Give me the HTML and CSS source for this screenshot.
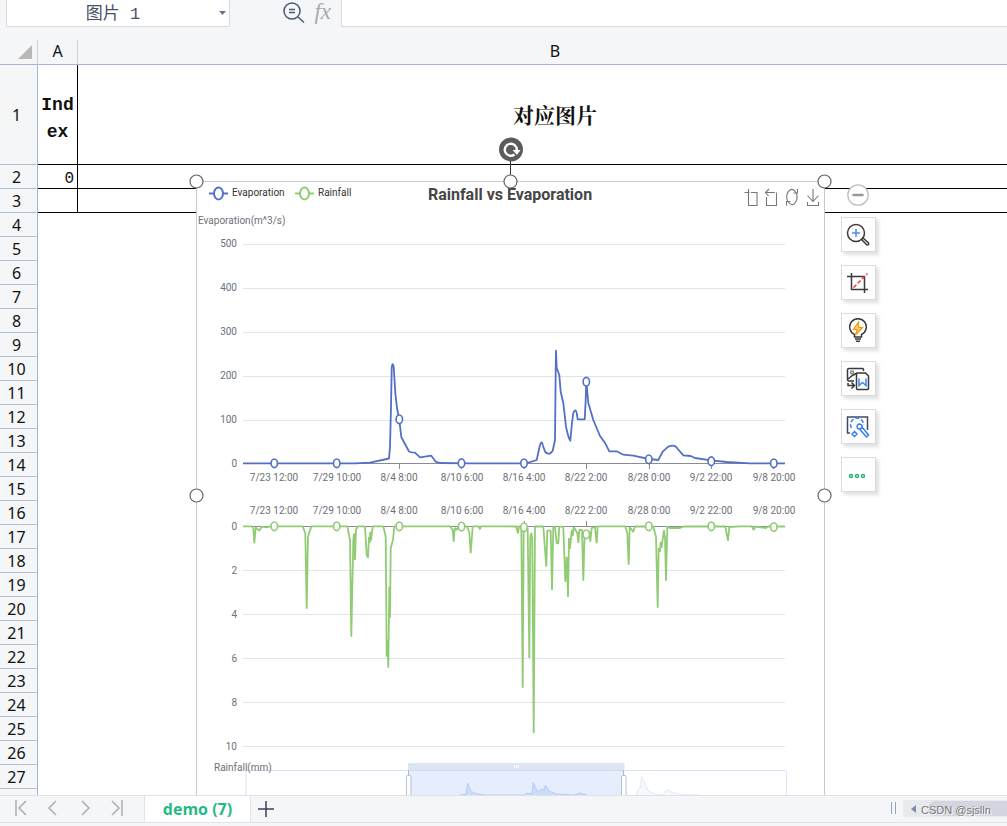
FILE: index.html
```html
<!DOCTYPE html>
<html lang="zh-CN">
<head>
<meta charset="utf-8">
<title>demo (7)</title>
<link rel="stylesheet" href="styles.css">
</head>
<body>
<header class="formula-bar">
  <div class="name-box">
    <input class="name-input" type="text" value="图片 1" aria-label="Name box">
    <button class="name-arrow" type="button" aria-label="Open name list"><svg width="7" height="4" viewBox="0 0 7 4"><path d="M0 0h7L3.5 4z" fill="#66748c"/></svg></button>
  </div>
  <div class="formula-tools">
    <button class="plain" type="button" aria-label="Zoom out"><svg width="24" height="24" viewBox="0 0 24 24" fill="none" stroke="#4b5872" stroke-width="1.5"><circle cx="10" cy="11" r="8"/><path d="M16 17l6 5.500M7 9.500h6M7 12.500h6"/></svg></button>
    <button class="plain fx" type="button">fx</button>
  </div>
  <input class="formula-input" type="text" aria-label="Formula">
</header>

<main class="sheet">
  <table class="grid">
    <colgroup><col class="col-num"><col class="col-a"><col></colgroup>
    <thead>
      <tr><th class="corner"><svg width="14" height="14" viewBox="0 0 14 14"><path d="M14 0v14H0z" fill="#b8b8b8"/></svg></th><th>A</th><th>B</th></tr>
    </thead>
    <tbody>
      <tr class="tall data"><th>1</th><td class="index">Ind<br>ex</td><td class="heading">对应图片</td></tr>
      <tr class="data"><th>2</th><td class="value">0</td><td></td></tr>
      <tr class="data"><th>3</th><td></td><td></td></tr>
      <tr><th>4</th><td></td><td></td></tr>
      <tr><th>5</th><td></td><td></td></tr>
      <tr><th>6</th><td></td><td></td></tr>
      <tr><th>7</th><td></td><td></td></tr>
      <tr><th>8</th><td></td><td></td></tr>
      <tr><th>9</th><td></td><td></td></tr>
      <tr><th>10</th><td></td><td></td></tr>
      <tr><th>11</th><td></td><td></td></tr>
      <tr><th>12</th><td></td><td></td></tr>
      <tr><th>13</th><td></td><td></td></tr>
      <tr><th>14</th><td></td><td></td></tr>
      <tr><th>15</th><td></td><td></td></tr>
      <tr><th>16</th><td></td><td></td></tr>
      <tr><th>17</th><td></td><td></td></tr>
      <tr><th>18</th><td></td><td></td></tr>
      <tr><th>19</th><td></td><td></td></tr>
      <tr><th>20</th><td></td><td></td></tr>
      <tr><th>21</th><td></td><td></td></tr>
      <tr><th>22</th><td></td><td></td></tr>
      <tr><th>23</th><td></td><td></td></tr>
      <tr><th>24</th><td></td><td></td></tr>
      <tr><th>25</th><td></td><td></td></tr>
      <tr><th>26</th><td></td><td></td></tr>
      <tr><th>27</th><td></td><td></td></tr>
      <tr><th>28</th><td></td><td></td></tr>
    </tbody>
  </table>

  <svg class="picture" width="629" height="629" viewBox="196 181 629 629">
    <rect x="196.500" y="181.500" width="628" height="628" fill="#fff" stroke="#c8cad0"/>
    <g stroke="#e0e6f1">
      <path d="M243 244.500H785M243 288.500H785M243 332.500H785M243 376.500H785M243 420.500H785M243 570.500H785M243 614.500H785M243 658.500H785M243 702.500H785M243 746.500H785"/>
    </g>
    <path d="M243 463.500H785M399.500 464v5M461.500 464v5M524.500 464v5M586.500 464v5M649.500 464v5M711.500 464v5M773.500 464v5M243 526.500H785M524.500 521v5M586.500 521v5" stroke="#8a8c94" fill="none"/>

    <g class="axis end">
      <text x="237" y="247">500</text><text x="237" y="291">400</text><text x="237" y="335">300</text><text x="237" y="379">200</text><text x="237" y="423">100</text><text x="237" y="467">0</text>
      <text x="237" y="530">0</text><text x="237" y="574">2</text><text x="237" y="618">4</text><text x="237" y="662">6</text><text x="237" y="706">8</text><text x="237" y="750">10</text>
    </g>
    <g class="axis mid">
      <text x="274" y="481">7/23 12:00</text><text x="337" y="481">7/29 10:00</text><text x="399" y="481">8/4 8:00</text><text x="462" y="481">8/10 6:00</text><text x="524" y="481">8/16 4:00</text><text x="586" y="481">8/22 2:00</text><text x="649" y="481">8/28 0:00</text><text x="711" y="481">9/2 22:00</text><text x="774" y="481">9/8 20:00</text>
      <text x="274" y="514">7/23 12:00</text><text x="337" y="514">7/29 10:00</text><text x="399" y="514">8/4 8:00</text><text x="462" y="514">8/10 6:00</text><text x="524" y="514">8/16 4:00</text><text x="586" y="514">8/22 2:00</text><text x="649" y="514">8/28 0:00</text><text x="711" y="514">9/2 22:00</text><text x="774" y="514">9/8 20:00</text>
    </g>
    <text class="axis" x="198" y="224">Evaporation(m^3/s)</text>
    <text class="chart-title" x="510" y="200">Rainfall vs Evaporation</text>

    <g fill="#fff" stroke-width="2">
      <path d="M209 193.500h19" stroke="#5470c6"/><ellipse cx="218.500" cy="193.500" rx="4.500" ry="6" stroke="#5470c6"/>
      <path d="M295 193.500h19" stroke="#91cc75"/><ellipse cx="304.500" cy="193.500" rx="4.500" ry="6" stroke="#91cc75"/>
    </g>
    <text class="legend" x="232" y="196">Evaporation</text>
    <text class="legend" x="318" y="196">Rainfall</text>

    <g fill="none" stroke="#777" stroke-width="1.100">
      <path d="M744.500 192.500h5M748.500 189v14.500v2H757V192.500h-6"/>
      <path d="M765.500 192.500h9.500M769 189l-3.500 3.500 3 3.500M776.500 192.500V205.500H766.500V197"/>
      <path d="M787.500 201A6.200 8 0 0 1 790 190q3-2 6 2.500M797.500 189v4h-4M796.500 193.500A6.200 8 0 0 1 794 204q-3 2-6-2.500M786.500 205.500v-4h4"/>
      <path d="M813 189v12M807.500 195.500l5.500 6 5.500-6M807.500 202v3.500h11v-3.500"/>
    </g>

    <path fill="none" stroke="#5470c6" stroke-width="1.800" stroke-linejoin="round" d="M243 463.300H355L370 462.600 389 458.500 390 447 391 407 391.700 368Q392.500 361 393.700 367L395.300 393 397 408 399.300 420 401.300 437 405 444 409 451.500 Q410 452.600 415 452.600L420 457.300 431.300 455.700 435.700 461.700 440 463 470 463.300H526L536.700 460 539.300 448Q541.300 438 543 446L545.300 452Q549.300 456 552.700 450.700L555 440 555.700 370 556 350.700 556.700 368 559.300 375 560.700 391.700 563.300 403 566 426.700 Q569 440 570.300 440.700L572 423 573.300 413Q576 407 577 415L577.700 419.300H584.700L585.700 400 586.300 381.700 588.300 403 593.300 420 600 436 605.300 443.300 609.300 451.300H616.700L623.300 454.700 633.300 455.700 649 459 658.300 460 662.700 451.700 668.300 446.700Q675 444 677 448L683.300 455.300 690.700 456 695 458 711.300 460.300 726.700 462 750 463.300H785"/>
    <g fill="#fff" stroke="#5470c6" stroke-width="1.600">
      <ellipse cx="274.300" cy="463.300" rx="3.200" ry="4.300"/><ellipse cx="336.700" cy="463.300" rx="3.200" ry="4.300"/><ellipse cx="399.300" cy="419.300" rx="3.200" ry="4.300"/><ellipse cx="461.500" cy="463.200" rx="3.200" ry="4.300"/><ellipse cx="524" cy="463.300" rx="3.200" ry="4.300"/><ellipse cx="586.300" cy="381.700" rx="3.200" ry="4.300"/><ellipse cx="648.800" cy="459.300" rx="3.200" ry="4.300"/><ellipse cx="711.300" cy="461.200" rx="3.200" ry="4.300"/><ellipse cx="773.800" cy="463.300" rx="3.200" ry="4.300"/>
    </g>

    <path fill="none" stroke="#91cc75" stroke-width="1.800" stroke-linejoin="bevel" d="M243 526.300H251.700L253.300 528.300 254.300 543.300 255.700 527.300 259.300 530.700 261.700 526.700 266.700 527.300 270 526.300H302.700L305.300 533.300 306.700 608.700 308 536.700 310 530 311.700 526.300H347.300L350 540 351.300 636.700 353.300 540 354 533.300 355 560 356 530 357.700 526.300H365L366.700 555 368 557.700 369 536.700 369.700 543 370.300 531.700 371 540.700 372.700 526.300H383.300L385.700 536.700 386.700 656.700 387.500 640 388.300 667.700 389.300 586.700 390 618 390.700 548.300 393 540 394.300 526.300H450L452.700 530 453.700 541.700 454.700 528 456.700 530 458.300 526.300H466.700L469.300 531.700 470.700 553.300 472.700 526.300H478.700L480 529.300 481 526.300H505L516 526.500 518 533.300 519 526.300H521.300L522.700 687.700 523.700 528H527.700L529.300 658 530.300 536.700 531.300 533 532.300 540 533.700 733 535 526.500H543.300L546.300 566.700 547.300 530.700H550.700L552 590 553.300 526.700H555L556.700 543.300H558.300L559.300 526.700H563.300L565.300 581.700 566.700 556.700 568 597 569 538 570 549 571.700 530 572.700 536 573.700 527 577.300 533 578.300 543 579.300 530H582L583.300 580.700 584.700 531.700 586.700 534 589.300 531.700 590.300 541.700 591.700 528 595 527 596.700 543.300 597.700 526.300H625L627.300 533 628.700 564.700 629.700 527 633.300 532 634.700 526.500 653.300 526.500 656 536.700 657.700 607.700 658.700 548 660 551.700 660.700 541.700 661.500 548 664 530 665 538 666 580.700 667.300 526.500 670 528 680 528 684 526.500H725.300L728 540.700 729.300 527 740 526.300H751.700L753.700 530 755.300 526.500 766 528 768 526.500H785"/>
    <g fill="#fff" stroke="#91cc75" stroke-width="1.600">
      <ellipse cx="274.300" cy="526.300" rx="3.200" ry="4.300"/><ellipse cx="336.700" cy="526.300" rx="3.200" ry="4.300"/><ellipse cx="399.300" cy="526.300" rx="3.200" ry="4.300"/><ellipse cx="461.500" cy="526.600" rx="3.200" ry="4.300"/><ellipse cx="524" cy="527.300" rx="3.200" ry="4.300"/><ellipse cx="586.300" cy="534.300" rx="3.200" ry="4.300"/><ellipse cx="648.800" cy="526.300" rx="3.200" ry="4.300"/><ellipse cx="711.300" cy="526.300" rx="3.200" ry="4.300"/><ellipse cx="773.800" cy="527" rx="3.200" ry="4.300"/>
    </g>

    <rect x="246" y="770.500" width="540.500" height="32" rx="2" fill="none" stroke="#d9e1f4"/>
    <rect x="408" y="763" width="216.500" height="7.500" rx="1" fill="#dce5f2"/>
    <path d="M408 770.500h216.500V803H408z" fill="#e6edfd"/>
    <path d="M408 770.500h216.500" stroke="#d2dbee"/>
    <path d="M514.500 765v3M516.500 765v3M518.500 765v3" stroke="#fff"/>
    <path d="M460 795L466 794 467.500 783 471 791 475 793.500 484 795 524 795 527 793 532 794 533.300 782.500 538 792.500 541 789 543.500 790 545.500 785.500 549 791 556 794 574 795 580 793 587 795V803H460z" fill="#ccdcfc" stroke="#b4cbfa"/>
    <path d="M636 795L639 788 640.500 788 641.500 776.500 644 781 648 791 654 793.500 663 795 667 789.500 672 792 680 794.500 700 795V803H636z" fill="#f6f8fd" stroke="#e3e9f6"/>
    <path d="M408.500 770v6M623.500 770v6" stroke="#acb8d1"/>
    <rect x="406.500" y="775.500" width="4.500" height="27" rx="1" fill="#fff" stroke="#b6c1d8"/><rect x="621.500" y="775.500" width="4.500" height="27" rx="1" fill="#fff" stroke="#b6c1d8"/>
    <text class="axis" x="214" y="771">Rainfall(mm)</text>

    <path d="M510.500 160v16" stroke="#333"/>
    <g fill="#fff" stroke="#646464" stroke-width="1.200"><circle cx="196.500" cy="181.500" r="6.500"/><circle cx="510.500" cy="181.500" r="6.500"/><circle cx="824.500" cy="181.500" r="6.500"/><circle cx="196.500" cy="495.500" r="6.500"/><circle cx="824.500" cy="495.500" r="6.500"/></g>
    <circle cx="511" cy="149.500" r="12" fill="#5b5b5b"/>
    <path d="M514.500 154.500A6 6 0 1 1 516.800 150" fill="none" stroke="#fff" stroke-width="2.400"/><path d="M512.500 150h8l-3.500 5z" fill="#fff"/>
  </svg>

  <div class="picture-tools">
    <button class="collapse" type="button" aria-label="Collapse"><svg width="22" height="22" viewBox="0 0 22 22"><circle cx="11" cy="11" r="10.200" fill="#fff" stroke="#bdbdbd" stroke-width="1.300"/><path d="M6.500 11h9" stroke="#999" stroke-width="2.600" stroke-linecap="round"/></svg></button>
    <button class="tool" type="button" aria-label="Zoom in"><svg width="26" height="26" viewBox="0 0 26 26" fill="none" stroke="#3a3a3a" stroke-width="1.500"><circle cx="11" cy="11" r="8.500"/><path d="M7 11h8M11 7v8" stroke="#4c8bf5"/><path d="M16.500 17.500l1.500-1.500 5.500 5q.8 2-1.500 2z"/></svg></button>
    <button class="tool" type="button" aria-label="Crop"><svg width="26" height="26" viewBox="0 0 26 26" fill="none" stroke="#3a3a3a" stroke-width="1.500"><path d="M2 6.500h17.500V23M6.500 3v16.500H23"/><path d="M8.500 17.500l14-14" stroke="#e8383d" stroke-dasharray="4 2"/></svg></button>
    <button class="tool" type="button" aria-label="Ideas"><svg width="26" height="26" viewBox="0 0 26 26" fill="none" stroke="#3a3a3a" stroke-width="1.500"><path d="M9.500 19v-2.500a8.300 8.300 0 1 1 7 0V19zM10 21h6M11 23.200h4"/><path d="M13.500 4l-5 7.500h3.500L10.500 17l7-7.500h-4z" fill="#ffd34d" stroke="#f39a1d" stroke-width="1.200"/></svg></button>
    <button class="tool" type="button" aria-label="Picture to text"><svg width="26" height="26" viewBox="0 0 26 26" fill="none" stroke="#3a3a3a" stroke-width="1.500"><path d="M18.500 5V3.500q0-1-1-1H4q-1.500 0-1.500 1.500v9.500q0 1.500 1.500 1.500h5M3 13l4.500-3.500L12 7"/><circle cx="7" cy="6.500" r="1.500" stroke="#888"/><path d="M3 17v2.500h6M6.500 16.500l3 3-3 3"/><path d="M12.500 7h8l3 3v12.500q0 1-1 1h-10q-1 0-1-1V8q0-1 1-1z" fill="#fff"/><path d="M14 12.500v7l3.500-3 3.500 3v-7" stroke="#4381ee"/></svg></button>
    <button class="tool" type="button" aria-label="Magic edit"><svg width="26" height="26" viewBox="0 0 26 26" fill="none" stroke="#3f4b63" stroke-width="1.500"><path d="M5 19H2.500V3h20v13"/><g stroke="#3b7cf0"><path d="M6.500 14a6.500 6.500 0 1 1 12-3" stroke-dasharray="4 2"/><path d="M12 12.500q0-2 2-2.500 3 0 3 3-1 2-3 2-2-.5-2-2.500zM15 15.500l2.500-2 6 7.500-2 2zM9.500 17.500l2.500 2.500-2.500 2.500L7 20z"/></g></svg></button>
    <button class="tool" type="button" aria-label="More"><svg width="26" height="26" viewBox="0 0 26 26" fill="none" stroke="#22b573" stroke-width="1.400"><circle cx="6" cy="14" r="1.500"/><circle cx="12" cy="14" r="1.500"/><circle cx="18" cy="14" r="1.500"/></svg></button>
  </div>
</main>

<footer class="tab-bar">
  <nav class="sheet-nav">
    <button class="plain" type="button" aria-label="First sheet"><svg width="14" height="16" viewBox="0 0 14 16"><path d="M2 0v16M12 1L5 8l7 7"/></svg></button>
    <button class="plain" type="button" aria-label="Previous sheet"><svg width="14" height="16" viewBox="0 0 14 16"><path d="M10 1L3 8l7 7"/></svg></button>
    <button class="plain" type="button" aria-label="Next sheet"><svg width="14" height="16" viewBox="0 0 14 16"><path d="M4 1l7 7-7 7"/></svg></button>
    <button class="plain" type="button" aria-label="Last sheet"><svg width="14" height="16" viewBox="0 0 14 16"><path d="M2 1l7 7-7 7M12 0v16"/></svg></button>
  </nav>
  <button class="tab" type="button">demo (7)</button>
  <button class="plain add" type="button" aria-label="Add sheet"><svg width="18" height="18" viewBox="0 0 18 18"><path d="M9 1v16M1 9h16" stroke="#39435a" stroke-width="1.500"/></svg></button>
  <span class="splitter"></span>
  <div class="scrollbar"><svg width="5" height="8" viewBox="0 0 5 8"><path d="M5 0v8L0 4z" fill="#7f8da6"/></svg><div class="thumb"></div><span class="watermark">CSDN @sjslln</span></div>
</footer>
</body>
</html>
```
FILE: styles.css
```css
* { box-sizing: border-box; }

body {
  margin: 0;
  height: 100vh;
  display: flex;
  flex-direction: column;
  overflow: hidden;
  background: #f5f6f8;
  color: #111;
  font-family: "Noto Sans", "Noto Sans CJK SC", sans-serif;
}

button, input { font: inherit; color: inherit; }
button { padding: 0; cursor: pointer; }
svg { display: block; }
.plain { border: 0; background: none; }

/* formula bar */
.formula-bar {
  flex: none;
  height: 40px;
  padding: 0 0 13px 6px;
  display: flex;
}
.name-box {
  width: 224px;
  display: flex;
  background: #fff;
  border: 1px solid #d7d9de;
  border-top: 0;
  border-radius: 0 0 2px 2px;
}
.name-input {
  flex: 1;
  min-width: 0;
  padding: 0 0 4px;
  border: 0;
  background: none;
  text-align: center;
  font-family: "Liberation Mono", "Noto Sans CJK SC", monospace;
  font-size: 17px;
  color: #465066;
}
.name-arrow {
  width: 10px;
  border: 0;
  background: none;
  display: grid;
  place-items: center start;
}
.formula-tools {
  width: 111px;
  padding: 0 10px 4px 0;
  display: flex;
  align-items: center;
  justify-content: flex-end;
  gap: 8px;
}
.fx {
  font-family: "Liberation Serif", serif;
  font-style: italic;
  font-size: 23px;
  line-height: 24px;
  color: #a9a9a9;
}
.formula-input {
  flex: 1;
  min-width: 0;
  border: 1px solid #d7d9de;
  border-width: 0 0 1px 1px;
  background: #fff;
}

/* cells */
.sheet {
  flex: 1;
  min-height: 0;
  position: relative;
  overflow: hidden;
  background: #fff;
}
.grid {
  width: calc(100% + 26px);
  table-layout: fixed;
  border-collapse: separate;
  border-spacing: 0;
}
.col-num { width: 38px; }
.col-a { width: 40px; }
.grid th, .grid td { height: 24px; padding: 0; line-height: 22px; }
.grid th { font-weight: 400; font-size: 16px; background: #f5f6f8; }
.grid thead th {
  height: 25px;
  padding-bottom: 2px;
  border-bottom: 1px solid #a9b5cf;
  border-right: 1px solid #c9d0df;
}
.grid thead .corner { padding: 0 0 0 18px; }
.grid tbody th {
  padding-right: 4px;
  border-right: 1px solid #a9b5cf;
  border-bottom: 1px solid #b4bed4;
}
.grid .tall th, .grid .tall td { height: 100px; }
.data td { border-right: 1px solid #000; border-bottom: 1px solid #000; }
.grid .index {
  text-align: center;
  font: bold 18px/27px "Liberation Mono", monospace;
  padding-top: 8px;
}
.grid .heading {
  text-align: center;
  font: bold 21px/27px "Noto Serif CJK SC", "Noto Sans CJK SC", serif;
}
.grid .value {
  text-align: right;
  padding: 4px 3px 0 0;
  line-height: 18px;
  font-family: "Liberation Mono", monospace;
  font-size: 16px;
}

/* floating picture */
.picture {
  position: absolute;
  left: 196px;
  top: 141px;
  overflow: visible;
  font-family: Roboto, sans-serif;
}
.axis { font-size: 10px; fill: #6e7079; }
.end { text-anchor: end; }
.mid { text-anchor: middle; }
.legend { font-size: 10px; fill: #333; }
.chart-title { font-size: 16px; font-weight: 700; text-anchor: middle; fill: #464646; }

.picture-tools {
  position: absolute;
  left: 841px;
  top: 144px;
  display: flex;
  flex-direction: column;
  gap: 13px;
}
.collapse {
  height: 20px;
  padding-left: 6px;
  border: 0;
  background: none;
}
.tool {
  width: 35px;
  height: 35px;
  padding-right: 2px;
  border: 1px solid #dcdcdc;
  background: #fff;
  box-shadow: 3px 3px 3px rgba(0, 0, 0, 0.12);
  display: grid;
  place-items: center;
}

/* sheet tabs */
.tab-bar {
  flex: none;
  height: 31px;
  padding-bottom: 3px;
  display: flex;
  border-top: 1px solid #dfe2e8;
  background: linear-gradient(#e1e3e9, #e1e3e9) 0 26px / 100% 1px no-repeat #f5f6f8;
}
.sheet-nav {
  width: 144px;
  padding: 0 20px 3px 14px;
  display: flex;
  align-items: center;
  justify-content: space-between;
  fill: none;
  stroke: #adadad;
  stroke-width: 1.5;
}
.tab {
  width: 107px;
  height: 27px;
  border: 1px solid #e1e3e9;
  border-top: 0;
  background: #fff;
  color: #1fbb83;
  font-family: "Open Sans", sans-serif;
  font-size: 16px;
  font-weight: 700;
}
.add { padding: 0 0 2px 6px; }
.splitter {
  width: 5px;
  height: 12px;
  margin: 6px 7px 0 auto;
  border: 1px solid #94a2ba;
  border-width: 0 1px;
}
.scrollbar {
  width: 104px;
  height: 17px;
  margin-top: 4px;
  padding-left: 8px;
  display: flex;
  align-items: center;
  gap: 12px;
  position: relative;
  background: #e8eaee;
}
.thumb { flex: 1; height: 15px; border-radius: 8px 0 0 8px; background: #d3d6de; }
.watermark {
  position: absolute;
  left: 18px;
  top: 2px;
  font: 11px/16px "Liberation Sans", sans-serif;
  color: #777;
  text-shadow: 1px 1px 0 #fff;
  white-space: nowrap;
}
```
